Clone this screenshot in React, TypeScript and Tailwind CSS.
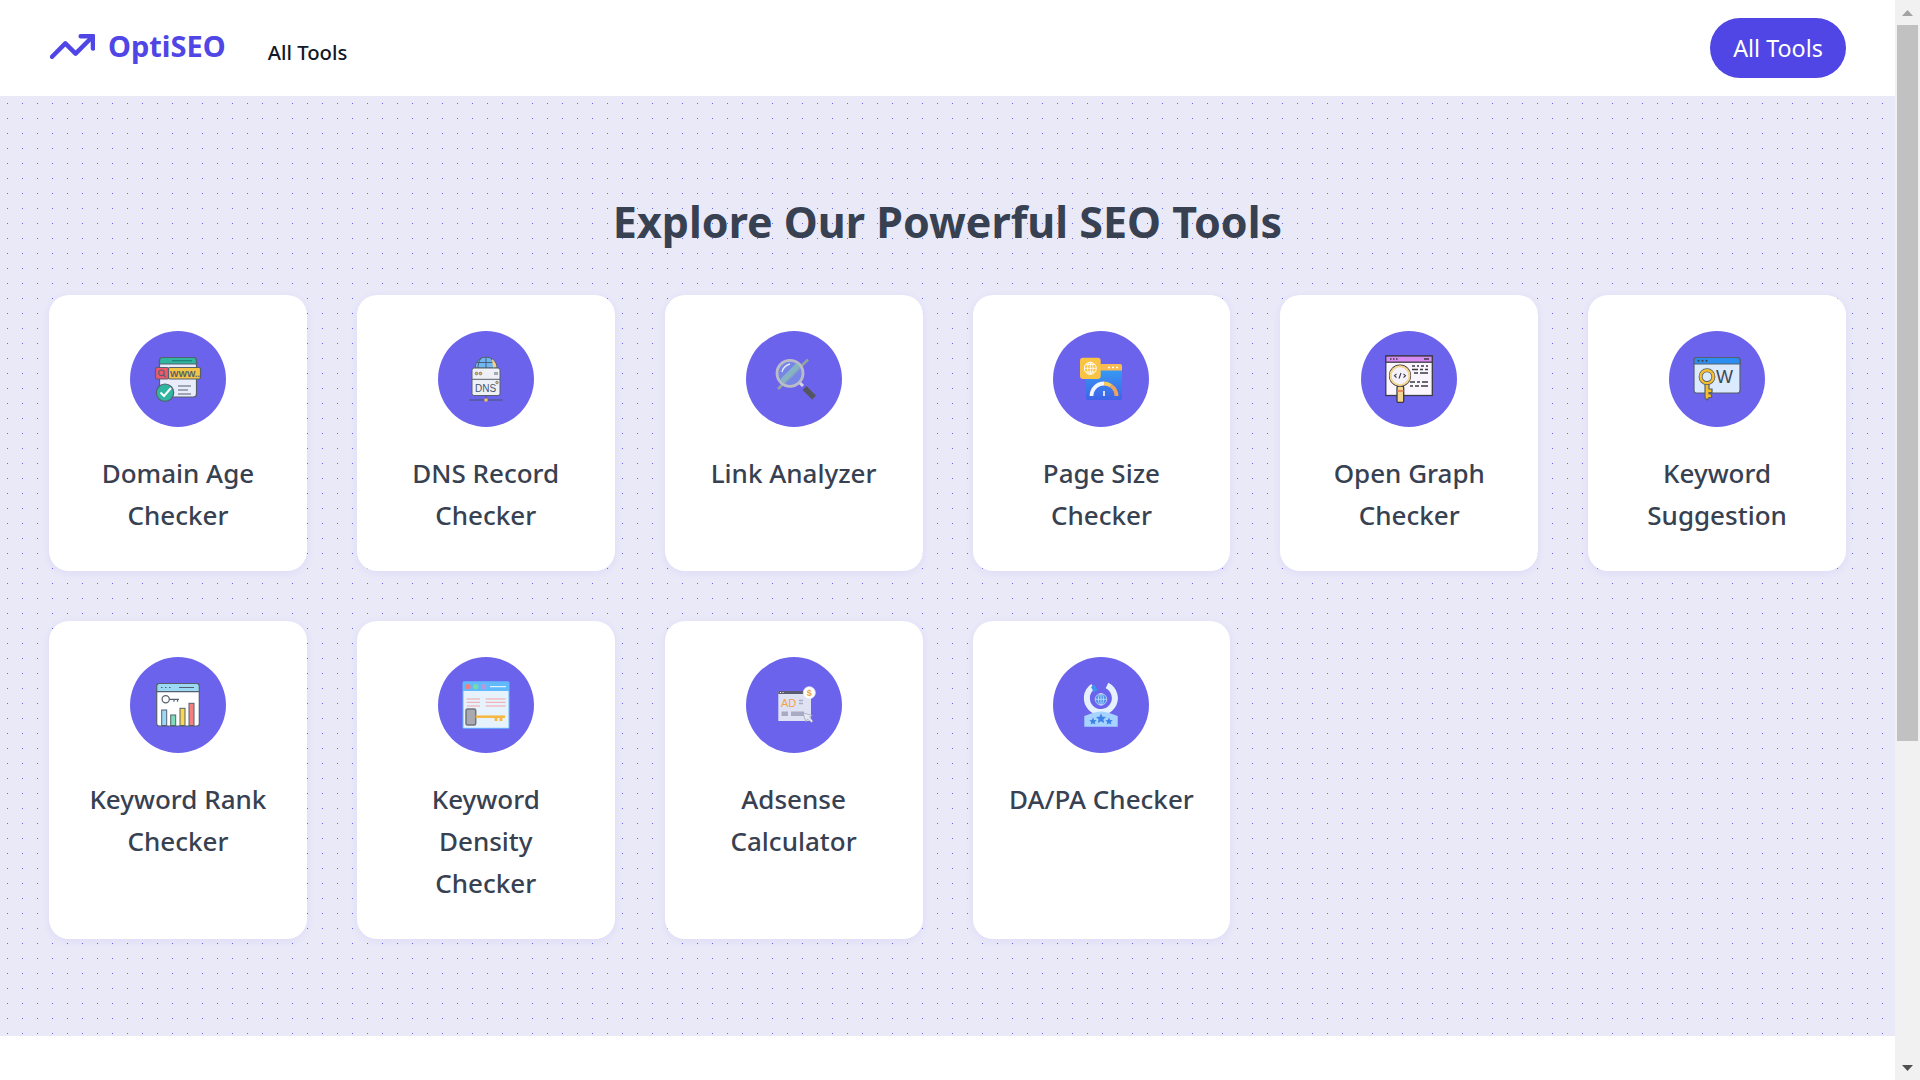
import React from "react";

const stroke = "#55606e";

function DomainIcon() {
  return (
    <svg viewBox="0 0 48 48" className="w-12 h-12">
      <rect x="5.5" y="2.5" width="37" height="39.5" rx="3" fill="#e8ecfb" stroke={stroke} strokeWidth="1.2" />
      <path d="M5.5 9V5.5a3 3 0 0 1 3-3h31a3 3 0 0 1 3 3V9z" fill="#2fb5a0" stroke={stroke} strokeWidth="1.2" />
      <path d="M18 5.7h20" stroke="#1d7f74" strokeWidth="1.2" />
      <rect x="1.5" y="12.5" width="13" height="11.5" rx="1.5" fill="#f0596b" stroke={stroke} strokeWidth="1.2" />
      <rect x="14.5" y="12.5" width="32" height="11.5" rx="1.5" fill="#f6c445" stroke={stroke} strokeWidth="1.2" />
      <circle cx="7.5" cy="17.8" r="2.8" fill="none" stroke={stroke} strokeWidth="1.2" />
      <path d="M9.5 20l2 2" stroke={stroke} strokeWidth="1.2" />
      <text x="16" y="22" fontSize="9" fontWeight="700" fill={stroke} className="font-['Liberation_Sans',sans-serif]">WWW..</text>
      <circle cx="11" cy="37.7" r="8.7" fill="#2fb5a0" stroke={stroke} strokeWidth="1.2" />
      <path d="M6.5 37.5l3.5 3.5 7-8" fill="none" stroke="#fff" strokeWidth="2" />
      <path d="M24 31h13M24 35h10M24 39h13" stroke={stroke} strokeWidth="1.1" />
    </svg>
  );
}

function DnsIcon() {
  return (
    <svg viewBox="0 0 48 48" className="w-12 h-12">
      <path d="M13 13a11 11 0 0 1 22 0z" fill="#6fb6f2" stroke={stroke} strokeWidth="1" />
      <path d="M24 2v11M19 3c-2 3-3 6-3 10M29 3c2 3 3 6 3 10M14.500 7.500h19" fill="none" stroke="#44566e" strokeWidth="0.9" />
      <path d="M30 4c3 2 4 5 4.500 8L31 13c0-3-1-6-1-9z" fill="#f3d08a" />
      <rect x="10" y="13" width="28" height="27.500" rx="2" fill="#eef0f6" stroke={stroke} strokeWidth="1" />
      <path d="M10 24.300h28" stroke={stroke} strokeWidth="1" />
      <circle cx="14.500" cy="18.500" r="1.400" fill="#e7b55c" stroke={stroke} strokeWidth="0.6" />
      <circle cx="18.500" cy="18.500" r="1.400" fill="#e7b55c" stroke={stroke} strokeWidth="0.6" />
      <path d="M33 17v3M35 17v3" stroke={stroke} strokeWidth="1" />
      <text x="13" y="37" fontSize="10" fill="#44566e" className="font-['Liberation_Sans',sans-serif]">DNS</text>
      <circle cx="35" cy="27.500" r="1.300" fill="#e7b55c" stroke={stroke} strokeWidth="0.6" />
      <path d="M24 40.500V45M7.500 45h33" stroke="#44566e" strokeWidth="1" />
      <circle cx="24" cy="45" r="1.800" fill="#f2bf62" />
    </svg>
  );
}

function LinkIcon() {
  return (
    <svg viewBox="0 0 48 48" className="w-12 h-12">
      <path d="M8 34L38 4.500" stroke="#90a59d" strokeWidth="2.500" />
      <circle cx="20" cy="18.300" r="13" fill="#7f9fe0" fillOpacity="0.6" stroke="#bcbcc8" strokeWidth="2.800" />
      <path d="M13 25L27 11" stroke="#8dc6b8" strokeWidth="5" strokeLinecap="round" strokeOpacity="0.7" />
      <path d="M12 17c1-4 4-7 8-8" fill="none" stroke="#e6ecff" strokeWidth="1.300" />
      <path d="M30 28l3 3" stroke="#d5d5dd" strokeWidth="3" />
      <path d="M34.500 33L44 42.500" stroke="#55555f" strokeWidth="5.500" />
    </svg>
  );
}

function PageSizeIcon() {
  return (
    <svg viewBox="0 0 48 48" className="w-12 h-12">
      <defs>
        <linearGradient id="ps-blue" x1="0" y1="0" x2="0" y2="1">
          <stop offset="0" stopColor="#35a5f5" />
          <stop offset="1" stopColor="#3e63e8" />
        </linearGradient>
      </defs>
      <rect x="9" y="9" width="36" height="36" rx="2.500" fill="url(#ps-blue)" />
      <path d="M20 9h23a2 2 0 0 1 2 2v4.500H20z" fill="#f9bb4f" />
      <path d="M31 12.500h2M35 12.500h2M39 12.500h2" stroke="#fff" strokeWidth="1.500" />
      <rect x="3" y="2.700" width="20.700" height="21.300" rx="3" fill="#fbc344" />
      <circle cx="13.300" cy="13.300" r="6" fill="none" stroke="#fff" strokeWidth="1" />
      <path d="M7.300 13.300h12M13.300 7.300v12M9 9.500h8.600M9 17h8.600" fill="none" stroke="#fff" strokeWidth="0.800" />
      <ellipse cx="13.300" cy="13.300" rx="2.800" ry="6" fill="none" stroke="#fff" strokeWidth="0.800" />
      <path d="M14.500 41a12.500 12.500 0 0 1 12.500-12.500" fill="none" stroke="#f3f6ff" strokeWidth="3.800" />
      <path d="M27 28.500a12.500 12.500 0 0 1 7 2.200" fill="none" stroke="#f8c95c" strokeWidth="3.800" />
      <path d="M34 30.700a12.500 12.500 0 0 1 5.500 10.300" fill="none" stroke="#f2a15d" strokeWidth="3.800" />
      <path d="M27 36v5" stroke="#fff" strokeWidth="1.600" />
    </svg>
  );
}

function OpenGraphIcon() {
  return (
    <svg viewBox="0 0 48 48" className="w-12 h-12">
      <rect x="0.800" y="1" width="46.500" height="39.500" fill="#fbf6fd" stroke="#3b3b45" strokeWidth="1.300" />
      <rect x="0.800" y="1" width="46.500" height="6.200" fill="#d78bf3" stroke="#3b3b45" strokeWidth="1.300" />
      <path d="M5 4h1.500M8 4h1.500M11 4h1.500M39 4h5" stroke="#3b3b45" strokeWidth="1.300" />
      <path d="M27 11h3M32 11h2M36 11h3M41 11h2M27 14.500h6M35 14.500h3M40 14.500h3M29 18h4M35 18h8M25 27h5M32 27h3M37 27h6M25 31h3M30 31h4M36 31h7" stroke="#3b3b45" strokeWidth="1.300" />
      <rect x="12" y="31" width="6.700" height="16.500" rx="1.500" fill="#f4d58d" stroke="#3b3b45" strokeWidth="1.300" />
      <path d="M12 36h6.700" stroke="#e76f51" strokeWidth="1.500" />
      <circle cx="15" cy="20.700" r="10.500" fill="#f6f2fb" stroke="#3b3b45" strokeWidth="1.200" />
      <circle cx="15" cy="20.700" r="9.500" fill="none" stroke="#f4d58d" strokeWidth="2" />
      <path d="M11.500 18.800L9.500 20.700l2 1.900M18.500 18.800l2 1.900-2 1.900M16 18l-2 5.500" fill="none" stroke="#3b3b45" strokeWidth="1.100" />
    </svg>
  );
}

function KeywordIcon() {
  return (
    <svg viewBox="0 0 48 48" className="w-12 h-12">
      <rect x="1" y="2.500" width="46" height="35.500" rx="2.500" fill="#dbeafc" stroke={stroke} strokeWidth="1.200" />
      <path d="M1 9V5a2.500 2.500 0 0 1 2.500-2.500h41A2.500 2.500 0 0 1 47 5v4z" fill="#2c8ef0" stroke={stroke} strokeWidth="1.200" />
      <circle cx="5.500" cy="5.800" r="1" fill="#3b3b45" />
      <circle cx="9.500" cy="5.800" r="1" fill="#3b3b45" />
      <circle cx="13.500" cy="5.800" r="1" fill="#3b3b45" />
      <text x="23" y="28" fontSize="18" fill="#3f4753" className="font-['Liberation_Sans',sans-serif]">W</text>
      <path d="M12 29h4v5h3v3.500h-3v1.500h2.500v3.500H16L14 45l-2-2z" fill="#f6bd2c" stroke={stroke} strokeWidth="1.200" />
      <circle cx="14" cy="21.700" r="6.400" fill="none" stroke={stroke} strokeWidth="4" />
      <circle cx="14" cy="21.700" r="6.400" fill="none" stroke="#f6bd2c" strokeWidth="2.400" />
    </svg>
  );
}

function RankIcon() {
  return (
    <svg viewBox="0 0 48 48" className="w-12 h-12">
      <rect x="2.700" y="2.500" width="42.600" height="42.500" rx="2.500" fill="#fff" stroke={stroke} strokeWidth="1.200" />
      <path d="M2.700 10.700V5a2.500 2.500 0 0 1 2.500-2.500h37.600A2.500 2.500 0 0 1 45.300 5v5.700z" fill="#9bd9f4" stroke={stroke} strokeWidth="1.200" />
      <path d="M7 6.500h1.500M11 6.500h1.500M15 6.500h1.500M25 6.500h15" stroke={stroke} strokeWidth="1.200" />
      <circle cx="11.700" cy="18.300" r="3.600" fill="none" stroke={stroke} strokeWidth="1.200" />
      <path d="M15.300 18.300H25M20 18.300v2.500M23.500 18.300v2.500" fill="none" stroke={stroke} strokeWidth="1.200" />
      <rect x="7.700" y="29" width="5" height="15.500" fill="#9bd9f4" stroke={stroke} strokeWidth="1" />
      <rect x="16.700" y="34" width="5" height="10.500" fill="#7fdcb6" stroke={stroke} strokeWidth="1" />
      <rect x="26" y="27.300" width="5" height="17.200" fill="#fbd651" stroke={stroke} strokeWidth="1" />
      <rect x="35" y="22.300" width="5" height="22.200" fill="#f47f7f" stroke={stroke} strokeWidth="1" />
    </svg>
  );
}

function DensityIcon() {
  return (
    <svg viewBox="0 0 48 48" className="w-12 h-12">
      <rect x="0.500" y="0.300" width="47" height="47.500" rx="1.500" fill="#62b9fc" />
      <rect x="1.500" y="10" width="45" height="36.800" fill="#e6f2fc" />
      <circle cx="6" cy="5.700" r="2.600" fill="#f57f7f" />
      <circle cx="13.700" cy="5.700" r="2.600" fill="#77dca9" />
      <circle cx="21.700" cy="5.700" r="2.600" fill="#b69ae0" />
      <path d="M28 5.700h16" stroke="#fff" strokeWidth="1" />
      <path d="M4.700 18h13.300M4.700 21.300h13.300M4.700 25h13.300M23.700 18h20M23.700 21.300h20M23.700 25h20" stroke="#f4a3a8" strokeWidth="1" />
      <rect x="4" y="28" width="9.700" height="16" rx="1.500" fill="#a9a9b2" stroke="#72727c" strokeWidth="1.500" />
      <path d="M13.700 35.700H43" stroke="#f7b63e" strokeWidth="2.500" />
      <path d="M34 36v4M39 36v4" stroke="#f7b63e" strokeWidth="2.800" />
    </svg>
  );
}

function AdsenseIcon() {
  return (
    <svg viewBox="0 0 48 48" className="w-12 h-12">
      <rect x="8.300" y="10" width="32.700" height="30" fill="#dfe2f2" />
      <rect x="8.300" y="10" width="32.700" height="3" fill="#5b5b72" />
      <path d="M10 11.500h1M12.500 11.500h1" stroke="#fff" strokeWidth="1" />
      <text x="11" y="26" fontSize="11" fill="#f0a24a" className="font-['Liberation_Sans',sans-serif]">AD</text>
      <path d="M29 19.500h4M29 22.500h4" stroke="#a7abc4" strokeWidth="1.500" />
      <rect x="11.500" y="30.500" width="6.500" height="4.500" fill="#a7abc4" />
      <rect x="21" y="30.500" width="13" height="4.500" fill="#a7abc4" />
      <circle cx="39.300" cy="11.700" r="6" fill="#fff" stroke="#e8e8f4" strokeWidth="0.800" />
      <text x="36.800" y="15" fontSize="9" fontWeight="700" fill="#f0a24a" className="font-['Liberation_Sans',sans-serif]">$</text>
      <path d="M33 32l3 9 1.500-3 4 3.500 1.500-1.500-3.500-4 3-1.500z" fill="#e8e9f4" stroke="#8f92ad" strokeWidth="0.600" />
    </svg>
  );
}

function DaPaIcon() {
  return (
    <svg viewBox="0 0 48 48" className="w-12 h-12">
      <path d="M30 4.500a14 14 0 1 1-14 1" fill="none" stroke="#e6f1ff" strokeWidth="6" />
      <path d="M14 6l3.500-2.500 3 5.500-3.500 2.500z" fill="#3f93ef" />
      <circle cx="24" cy="18.300" r="5.800" fill="#4f94ec" stroke="#e6f1ff" strokeWidth="0.600" />
      <path d="M18.200 18.300h11.600M24 12.500v11.600" stroke="#d9e9ff" strokeWidth="0.700" />
      <ellipse cx="24" cy="18.300" rx="2.600" ry="5.800" fill="none" stroke="#d9e9ff" strokeWidth="0.700" />
      <path d="M7.300 35l7-2.500c3-1 6-2 9.700-2s6.700 1 9.700 2l7 2.500v10.700H7.300z" fill="#a6d3ff" />
      <path d="M16 36.500l1.100 2.400 2.600.3-1.900 1.800.5 2.600-2.300-1.300-2.300 1.300.5-2.600-1.900-1.800 2.600-.3zM32 36.500l1.100 2.400 2.600.3-1.900 1.800.5 2.600-2.300-1.300-2.300 1.300.5-2.600-1.900-1.800 2.600-.3z" fill="#3f83ea" />
      <path d="M24 32.500l1.500 3.200 3.500.4-2.600 2.400.7 3.500-3.100-1.800-3.100 1.800.7-3.500-2.600-2.400 3.500-.4z" fill="#3f83ea" />
    </svg>
  );
}

const tools = [
  { name: "Domain Age Checker", icon: <DomainIcon /> },
  { name: "DNS Record Checker", icon: <DnsIcon /> },
  { name: "Link Analyzer", icon: <LinkIcon /> },
  { name: "Page Size Checker", icon: <PageSizeIcon /> },
  { name: "Open Graph Checker", icon: <OpenGraphIcon /> },
  { name: "Keyword Suggestion", icon: <KeywordIcon /> },
  { name: "Keyword Rank Checker", icon: <RankIcon /> },
  { name: "Keyword Density Checker", icon: <DensityIcon /> },
  { name: "Adsense Calculator", icon: <AdsenseIcon /> },
  { name: "DA/PA Checker", icon: <DaPaIcon /> },
];

function Scrollbar() {
  return (
    <div className="w-[25px] h-screen shrink-0 bg-[#f1f1f1] flex flex-col items-center">
      <div className="h-[25px] flex items-center justify-center">
        <svg viewBox="0 0 11 6" className="w-[11px] h-[6px]">
          <path d="M5.500 0L11 6H0z" fill="#a3a3a3" />
        </svg>
      </div>
      <div className="w-[21px] h-[716px] bg-[#c1c1c1]" />
      <div className="flex-1" />
      <div className="h-[25px] flex items-center justify-center">
        <svg viewBox="0 0 11 6" className="w-[11px] h-[6px]">
          <path d="M0 0h11L5.500 6z" fill="#505050" />
        </svg>
      </div>
    </div>
  );
}

export default function App() {
  return (
    <div className="flex h-screen overflow-hidden bg-white font-['Noto_Sans',sans-serif]">
      <div className="flex-1 min-w-0">
        <header className="h-24 flex items-center justify-between pl-[50px] pr-[49px] bg-white">
          <div className="flex items-center">
            <a className="flex items-center gap-[13px] -mt-[3px]">
              <svg viewBox="1 6 22 12" className="w-[45px] h-[25px]" fill="none" stroke="#4f46e5" strokeWidth="2.200" strokeLinecap="round" strokeLinejoin="round">
                <path d="M22 7l-8.500 8.500-5-5L2 17" />
                <path d="M16 7h6v6" />
              </svg>
              <span className="text-[29px] font-bold leading-none text-[#4f46e5] -mt-[2px]">OptiSEO</span>
            </a>
            <a className="ml-[42px] mt-[8px] text-[20.300px] font-medium text-[#111827]">All Tools</a>
          </div>
          <button className="w-[136px] h-[60px] rounded-full bg-[#4f46e5] text-white text-[23.300px]">All Tools</button>
        </header>

        <main className="h-[940px] px-[49px] pt-24 bg-[#eae9f8] bg-[radial-gradient(#6366f1_0.6px,transparent_0.6px)] bg-[size:15px_15px]">
          <h1 className="text-center text-[43px] leading-[60px] font-bold text-[#374151] mb-[43px]">
            Explore Our Powerful SEO Tools
          </h1>
          <div className="grid grid-cols-6 gap-[50px] items-stretch">
            {tools.map((tool) => (
              <div key={tool.name} className="flex flex-col items-center pt-9 pb-[35px] px-[30px] bg-white rounded-[20px] shadow-[0_2px_8px_rgba(79,70,229,0.08)]">
                <div className="w-24 h-24 rounded-full bg-[#6c63ec] flex items-center justify-center mb-[25px]">
                  {tool.icon}
                </div>
                <p className="text-center text-[26px] leading-[42px] font-medium text-[#374151]">{tool.name}</p>
              </div>
            ))}
          </div>
        </main>
      </div>
      <Scrollbar />
    </div>
  );
}
